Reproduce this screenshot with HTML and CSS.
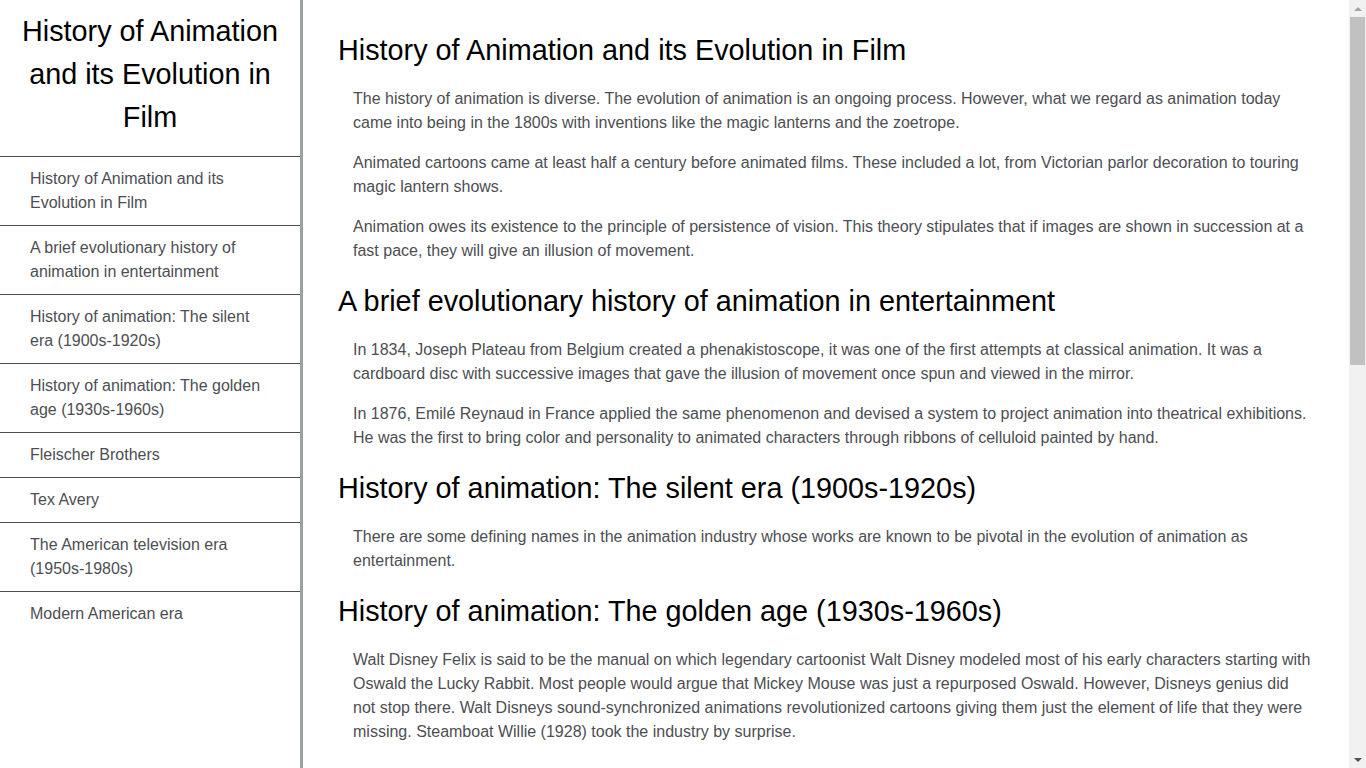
FILE: index.html
```html
<!DOCTYPE html>
<html lang="en">
<head>
<meta charset="utf-8">
<title>History of Animation and its Evolution in Film</title>
<link rel="stylesheet" href="styles.css">
</head>
<body>
<nav id="navbar">
  <header class="nav-title">History of Animation and its Evolution in Film</header>
  <ul class="nav-list">
    <li><a class="nav-link" href="#History_of_Animation_and_its_Evolution_in_Film">History of Animation and its Evolution in Film</a></li>
    <li><a class="nav-link" href="#A_brief_evolutionary_history_of_animation_in_entertainment">A brief evolutionary history of animation in entertainment</a></li>
    <li><a class="nav-link" href="#silent">History of animation: The silent era (1900s-1920s)</a></li>
    <li><a class="nav-link" href="#golden">History of animation: The golden age (1930s-1960s)</a></li>
    <li><a class="nav-link" href="#Fleischer_Brothers">Fleischer Brothers</a></li>
    <li><a class="nav-link" href="#Tex_Avery">Tex Avery</a></li>
    <li><a class="nav-link" href="#tv">The American television era (1950s-1980s)</a></li>
    <li><a class="nav-link" href="#Modern_American_era">Modern American era</a></li>
  </ul>
</nav>
<main id="main-doc">
  <section class="main-section" id="History_of_Animation_and_its_Evolution_in_Film">
    <header class="section-title">History of Animation and its Evolution in Film</header>
    <article class="section-body">
      <p>The history of animation is diverse. The evolution of animation is an ongoing process. However, what we regard as animation today came into being in the 1800s with inventions like the magic lanterns and the zoetrope.</p>
      <p>Animated cartoons came at least half a century before animated films. These included a lot, from Victorian parlor decoration to touring magic lantern shows.</p>
      <p>Animation owes its existence to the principle of persistence of vision. This theory stipulates that if images are shown in succession at a fast pace, they will give an illusion of movement.</p>
    </article>
  </section>
  <section class="main-section" id="A_brief_evolutionary_history_of_animation_in_entertainment">
    <header class="section-title">A brief evolutionary history of animation in entertainment</header>
    <article class="section-body">
      <p>In 1834, Joseph Plateau from Belgium created a phenakistoscope, it was one of the first attempts at classical animation. It was a cardboard disc with successive images that gave the illusion of movement once spun and viewed in the mirror.</p>
      <p>In 1876, Emilé Reynaud in France applied the same phenomenon and devised a system to project animation into theatrical exhibitions. He was the first to bring color and personality to animated characters through ribbons of celluloid painted by hand.</p>
    </article>
  </section>
  <section class="main-section" id="silent">
    <header class="section-title">History of animation: The silent era (1900s-1920s)</header>
    <article class="section-body">
      <p>There are some defining names in the animation industry whose works are known to be pivotal in the evolution of animation as entertainment.</p>
    </article>
  </section>
  <section class="main-section" id="golden">
    <header class="section-title">History of animation: The golden age (1930s-1960s)</header>
    <article class="section-body">
      <p>Walt Disney Felix is said to be the manual on which legendary cartoonist Walt Disney modeled most of his early characters starting with Oswald the Lucky Rabbit. Most people would argue that Mickey Mouse was just a repurposed Oswald. However, Disneys genius did not stop there. Walt Disneys sound-synchronized animations revolutionized cartoons giving them just the element of life that they were missing. Steamboat Willie (1928) took the industry by surprise.</p>
    </article>
  </section>
  <section class="main-section" id="Fleischer_Brothers">
    <header class="section-title">Fleischer Brothers</header>
    <article class="section-body">
      <p>Max and Dave Fleischer introduced the rotoscope, a device that allowed animators to trace over live-action footage. Their studio gave the world Betty Boop and the animated Popeye the Sailor.</p>
    </article>
  </section>
  <section class="main-section" id="Tex_Avery">
    <header class="section-title">Tex Avery</header>
    <article class="section-body">
      <p>Tex Avery brought a wild, fast-paced and irreverent style to the Warner Bros. cartoons, helping to shape characters such as Bugs Bunny, Daffy Duck and Porky Pig.</p>
    </article>
  </section>
  <section class="main-section" id="tv">
    <header class="section-title">The American television era (1950s-1980s)</header>
    <article class="section-body">
      <p>With the arrival of television, studios like Hanna-Barbera developed limited animation techniques that made it possible to produce cartoons quickly and cheaply for weekly broadcast, giving us The Flintstones and Scooby-Doo.</p>
    </article>
  </section>
  <section class="main-section" id="Modern_American_era">
    <header class="section-title">Modern American era</header>
    <article class="section-body">
      <p>Computer-generated imagery changed animation once again. Toy Story (1995) by Pixar was the first fully computer-animated feature film, and digital tools now shape nearly every animated production.</p>
    </article>
  </section>
</main>
<div class="scrollbar" aria-hidden="true">
  <span class="sb-arrow sb-up"></span>
  <span class="sb-thumb"></span>
  <span class="sb-arrow sb-down"></span>
</div>
</body>
</html>
```

FILE: styles.css
```css
html, body {
  margin: 0;
  padding: 0;
}

body {
  font-family: "Liberation Sans", Arial, sans-serif;
  background: #ffffff;
  color: #4d4e53;
}

#navbar {
  position: fixed;
  top: 0;
  left: 0;
  width: 300px;
  height: 100%;
  border-right: 3px solid #9ba1a1;
  background: #ffffff;
  overflow-y: auto;
}

.nav-title {
  color: #000000;
  font-size: 28.8px;
  line-height: 43px;
  text-align: center;
  padding: 10px 10px 17px;
}

.nav-list {
  list-style: none;
  margin: 0;
  padding: 0;
}

.nav-list li {
  border-top: 1px solid #4d4e53;
}

.nav-link {
  display: block;
  padding: 10px 30px;
  font-size: 16px;
  line-height: 24px;
  color: #4d4e53;
  text-decoration: none;
}

#main-doc {
  margin-left: 303px;
  padding: 12px 54px 200px 35px;
}

.section-title {
  color: #000000;
  font-size: 28.8px;
  line-height: 32px;
  margin: 22px 0 21px;
}

.section-body {
  padding-left: 15px;
}

.section-body p {
  margin: 0 0 16px;
  font-size: 16px;
  line-height: 24px;
}

.main-section:last-child .section-body p:last-child {
  margin-bottom: 0;
}

/* drawn page scrollbar, overlaying the right edge */
.scrollbar {
  position: fixed;
  top: 0;
  right: 0;
  width: 17px;
  height: 100%;
  background: #f1f1f1;
  display: flex;
  flex-direction: column;
  align-items: center;
}

.sb-arrow {
  flex: 0 0 17px;
  width: 17px;
  display: flex;
  align-items: center;
  justify-content: center;
}

.sb-arrow::before {
  content: "";
  width: 0;
  height: 0;
  border-left: 4px solid transparent;
  border-right: 4px solid transparent;
}

.sb-up::before {
  border-bottom: 4px solid #a3a3a3;
}

.sb-down {
  margin-top: auto;
}

.sb-down::before {
  border-top: 4px solid #505050;
}

.sb-thumb {
  width: 15px;
  height: 348px;
  background: #c1c1c1;
}
```
